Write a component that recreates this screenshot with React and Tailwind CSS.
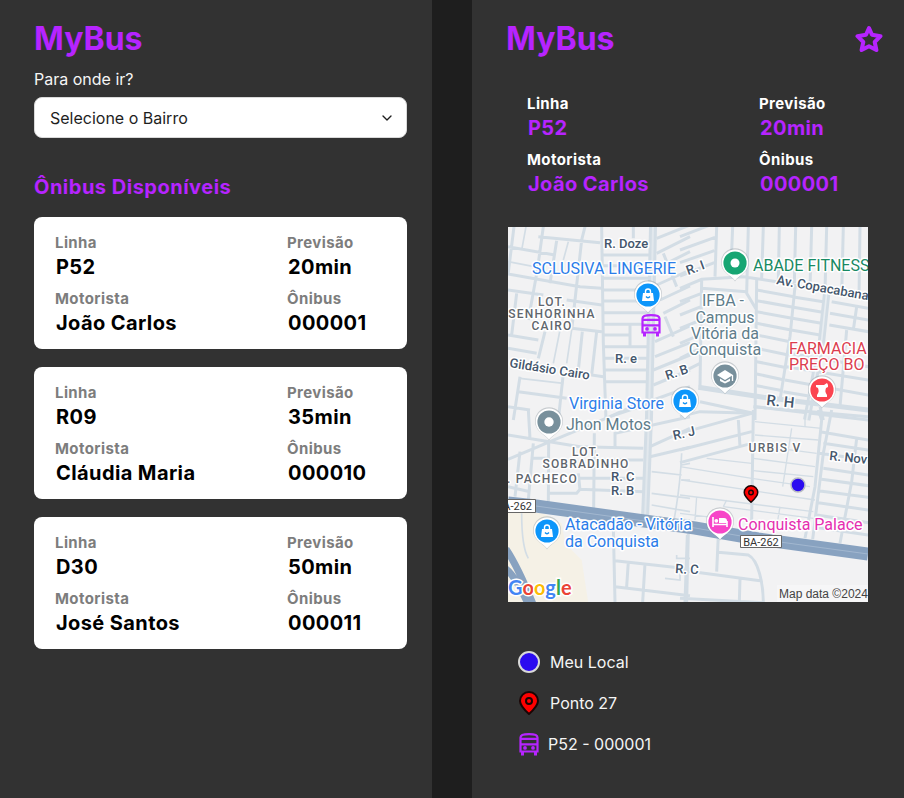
import { ChevronDown } from 'lucide-react';

const buses = [
  { line: 'P52', eta: '20min', driver: 'João Carlos', bus: '000001' },
  { line: 'R09', eta: '35min', driver: 'Cláudia Maria', bus: '000010' },
  { line: 'D30', eta: '50min', driver: 'José Santos', bus: '000011' },
];

function Field({ label, value, dark }) {
  return (
    <div className="font-bold tracking-wide">
      <dt className={dark ? 'text-[15px] leading-6 text-white' : 'text-[15px] leading-6 text-[#7d7d7d]'}>{label}</dt>
      <dd className={dark ? 'pl-px text-xl leading-6 text-[#b624ff]' : 'pl-px text-xl leading-6 text-black'}>{value}</dd>
    </div>
  );
}

function BusInfo({ data, dark }) {
  return (
    <dl className="grid grid-cols-[1fr_99px] gap-y-2 px-[21px] py-3.5">
      <Field label="Linha" value={data.line} dark={dark} />
      <Field label="Previsão" value={data.eta} dark={dark} />
      <Field label="Motorista" value={data.driver} dark={dark} />
      <Field label="Ônibus" value={data.bus} dark={dark} />
    </dl>
  );
}

function StarIcon(props) {
  return (
    <svg viewBox="0 0 28 28" fill="none" stroke="#b624ff" strokeWidth="4" strokeLinejoin="round" aria-hidden="true" {...props}>
      <path d="M14 3 17 9.800 25.500 11.200 19.700 17 21.400 25 14 21.200 6.600 25 8.300 17 2.500 11.200 11 9.800Z" />
    </svg>
  );
}

function BusIcon(props) {
  return (
    <svg viewBox="0 0 20 23" fill="none" stroke="#b624ff" strokeWidth="2.200" aria-hidden="true" {...props}>
      <path d="M1.500 18.500V4.500C1.500 2 4 1.200 10 1.200s8.500.800 8.500 3.300V18.500Z M1.500 5.800H18.500 M1.500 11.300H18.500" />
      <path d="M3.500 18v4.500M16.500 18v4.500" strokeWidth="3" />
      <circle cx="6" cy="14.900" r="1.900" fill="#b624ff" stroke="none" />
      <circle cx="14" cy="14.900" r="1.900" fill="#b624ff" stroke="none" />
    </svg>
  );
}

function StopIcon(props) {
  return (
    <svg viewBox="0 0 20 24" fill="#f00" stroke="#1a0505" strokeWidth="2" strokeLinejoin="round" aria-hidden="true" {...props}>
      <path d="M10 23C5 18.500 1 14.500 1 10a9 9 0 0 1 18 0c0 4.500-4 8.500-9 13Z" />
      <circle cx="10" cy="10" r="3" />
    </svg>
  );
}

function Pin({ x, y, color, children }) {
  return (
    <g transform={`translate(${x} ${y})`}>
      <path d="M0 18.500C-2 15-6 13-10 9A14 14 0 1 1 10 9C6 13 2 15 0 18.500Z" fill="#7a8790" opacity=".35" />
      <path d="M0 17.500C-2 14.500-6 12.500-9.500 9A13.300 13.300 0 1 1 9.500 9C6 12.500 2 14.500 0 17.500Z" fill="#fff" />
      <circle r="11.600" fill={color} />
      {children}
    </g>
  );
}

function Bag() {
  return (
    <g>
      <path d="M-5-2H5L6 6H-6Z" fill="#fff" />
      <path d="M-2.500-1.500V-3.500a2.500 2.500 0 0 1 5 0V-1.500" fill="none" stroke="#fff" strokeWidth="1.400" />
      <path d="M-2 1.500Q0 4 2 1.500" fill="none" stroke="#0d8ff2" strokeWidth="1.300" />
    </g>
  );
}

function CityMap() {
  return (
    <svg viewBox="0 0 360 375" role="img" aria-label="Mapa da linha" className="block h-auto w-full bg-[#f2f2f3]">
      <g transform="translate(-8 183) scale(.33333)">
        <path d="M24 300 130 310 185 340 195 400 245 450 265 580H24Z" fill="#f5f1e6" />
      </g>
      <g fill="none" stroke="#d3dde5" strokeWidth="9">
        <g transform="translate(-8 -7) scale(.33333)">
          <path d="M42 20 24 165M130 20 112 150 85 300M115 50 300 68M24 80 160 104M170 62 150 190M255 20 245 60 215 330M305 20 310 370 318 600M400 20V55M24 162 240 200 305 205M24 210 130 225M200 240 305 255M310 105H450M310 137H450M24 345 115 360M24 385 110 400M215 325 305 335M50 220 35 345M135 335 115 415M247 335 235 450M290 335 275 465 310 470M310 175H450M310 210H450M310 243H450M310 278H450M310 313H450M310 345H390M310 380H450M310 415H450M310 450H450M310 485H450M390 310V380M24 560 90 570M55 515 200 535M60 470 40 600M190 460 175 600M330 590 450 550" />
          <path d="M470 55 570 15M470 100 570 50M470 145 570 95M470 195 570 150M480 240 570 198M490 280 570 240M465 365 570 318M465 410 570 368M460 450 570 405M460 495 570 450M460 540 570 500M490 100 530 200M495 290 520 350" />
          <path d="M78 20 66 85M205 65 190 120M24 125 130 145M180 330 160 430M215 330 200 430M60 475 190 490" strokeWidth="5" />
        </g>
        <g transform="translate(172 -7) scale(.33333)">
          <path d="M0 50 90 15M0 90 105 52M0 128 103 92M0 168 103 128M0 205 65 178 190 170 290 185 565 240M0 245 65 220M0 285 63 260M0 325 63 300M0 370 63 343M0 415 60 385M0 460 60 430M110 20 105 170M158 20 155 95M205 20 200 220 230 270M250 20 245 175M298 20 295 180M347 20 343 190M395 20 390 205M440 20 435 215M490 20 485 225M540 20 537 235M65 178 60 500M65 205 200 215M230 180 225 600M345 200 330 350 300 540" />
          <path d="M230 210 342 230M230 242 340 262M230 275 336 295M230 310 333 330M230 345 330 365M230 385 325 405M230 425 320 443M230 462 313 480M230 497 308 512M345 232 430 245M340 262 428 277M337 295 424 310M333 330 420 345M326 400 565 440M320 440 565 480M315 480 565 525M310 515 400 530M455 245 565 265M450 280 565 300M448 315 565 335M530 260 520 330M500 330 480 560M60 545 220 580M0 590 60 575 220 580M225 560 565 600M420 560 430 600" />
          <path d="M440 220 425 360 380 600" strokeWidth="22" />
          <path d="M440 220 425 360 380 600" stroke="#e8edf1" strokeWidth="5" />
          <path d="M55 502 250 532 565 570" strokeWidth="15" />
        </g>
        <g transform="translate(-8 183) scale(.33333)">
          <path d="M24 75 240 110 430 115M24 148 150 95 330 20 440-30M60 125 45 260M85 0 90 85M100 100 85 270M146 95 145 285M283 70 281 300M345 110V70L570 20M24 230 90 245M95 145H145M145 250H230L240 238 430 245M240 205H430M235 190 240 240M283 150H430M450 140 570 112M450 110 570 55M340 350 345 576M345 452 570 477M385 455 380 530M345 530 570 557M435 460 428 576M565 370 560 576" />
          <path d="M65 310C65 380 70 420 85 445M545 130Q540 240 520 340M455 185 545 195M455 250 570 265M455 285 570 305M450 320 570 330M545 165 570 160M543 210H570M530 435V445H570M495 505 540 510V480" strokeWidth="5" />
        </g>
        <g transform="translate(172 183) scale(.33333)">
          <path d="M220 0 215 330M415 0 425 30 405 230 375 385M455 0 430 130 398 388M530 85 515 215 480 400M0 70 215 10M0 120 215 65M0 158 215 100M175 30 180 110M220-10 565 20M420 65 565 90M430 100 565 120M418 130 565 150M430 175 565 195M425 208 565 227M420 243 565 262M415 278 565 300M410 315 565 338M405 352 565 375M115 375 110 485M0 480 240 512M115 427 205 435C235 450 250 520 250 580M22 375 15 576M180 505 178 576M0 565 250 578" />
          <path d="M225 35 425 55M225 75 415 90M220 105 410 130M220 145 405 170M220 182 400 200M80 145 215 160M0 170 215 205 390 230M5 210 405 270M0 255 400 305M130 290 400 325M335 55 308 230M375 0V50M50 260 45 330M0 310 120 325M130 290 140 270M300 290 290 350" strokeWidth="4" />
        </g>
      </g>
      <path d="M145 0 141 190 137 292" fill="none" stroke="#d3dde5" strokeWidth="8" />
      <path d="M145 0 141 190 137 292" fill="none" stroke="#e2e8ed" strokeWidth="2" />
      <g fill="none">
        <path d="M0 276 28 279 100 289 187 301 250 312 360 327" stroke="#88a2c0" strokeWidth="13" />
        <path d="M28 279 100 289 187 301 250 312 360 327" stroke="#a2b7cf" strokeWidth="1" />
        <path d="M-2 322Q10 340 25 377M-2 342Q8 350 20 377" stroke="#88a2c0" strokeWidth="7" />
      </g>

      <g className="[font-family:Roboto,sans-serif]" stroke="#fff" strokeWidth="3" strokeLinejoin="round" paintOrder="stroke" fontSize="16">
        <g fontSize="13" fontWeight="500" fill="#44566c">
          <text x="96" y="21">R. Doze</text>
          <text x="107" y="136">R. e</text>
          <text transform="translate(1 140) rotate(9)">Gildásio Cairo</text>
          <text transform="translate(159 153) rotate(-18)">R. B</text>
          <text transform="translate(180 48) rotate(-20)">R. I</text>
          <text transform="translate(268 57) rotate(10)">Av. Copacabana</text>
          <text fontSize="15" transform="translate(258 178) rotate(6)">R. H</text>
          <text transform="translate(166 213) rotate(-13)">R. J</text>
          <text transform="translate(321 233) rotate(6)">R. Nov</text>
          <text x="103" y="254">R. C</text>
          <text x="103" y="268">R. B</text>
          <text transform="translate(167 346) rotate(3)">R. C</text>
        </g>
        <g fontSize="12" fontWeight="500" fill="#5f666d" textAnchor="middle" className="tracking-widest">
          <text x="44" y="79">LOT.</text>
          <text x="44" y="91">SENHORINHA</text>
          <text x="44" y="103">CAIRO</text>
          <text x="78" y="229">LOT.</text>
          <text x="78" y="241">SOBRADINHO</text>
          <text x="267" y="225">URBIS V</text>
          <text x="70" y="256" textAnchor="end">. PACHECO</text>
        </g>
        <g fill="#2b7de9">
          <text x="24" y="47">SCLUSIVA LINGERIE</text>
          <text x="61" y="182">Virginia Store</text>
          <text x="57" y="303">Atacadão - Vitória</text>
          <text x="57" y="320">da Conquista</text>
        </g>
        <text x="245" y="44" fill="#188a63">ABADE FITNESS</text>
        <g fill="#607d8b">
          <text x="58" y="203">Jhon Motos</text>
          <g textAnchor="middle">
            <text x="215" y="79">IFBA -</text>
            <text x="217" y="96">Campus</text>
            <text x="217" y="112">Vitória da</text>
            <text x="217" y="128">Conquista</text>
          </g>
        </g>
        <g fill="#dc3d4e">
          <text x="281" y="127">FARMACIA</text>
          <text x="281" y="143">PREÇO BO</text>
        </g>
        <text x="230" y="303" fill="#e52fb0">Conquista Palace</text>
      </g>

      <Pin x={140} y={68} color="#0d96fa"><Bag /></Pin>
      <Pin x={177} y={174} color="#0d96fa"><Bag /></Pin>
      <Pin x={39} y={304} color="#0d96fa"><Bag /></Pin>
      <Pin x={227} y={36} color="#17a673"><circle r="4.500" fill="#fff" /></Pin>
      <Pin x={41} y={195} color="#78909c"><circle r="4.700" fill="#fff" /></Pin>
      <Pin x={217} y={149} color="#78909c">
        <path d="M-8-1 0-6 8-1 0 4ZM-5 2.500 0 5.500 5 2.500V5L0 7.500-5 5Z" fill="#fff" />
        <path d="M7.500-1V5" stroke="#fff" strokeWidth="1.300" />
      </Pin>
      <Pin x={314} y={163} color="#fb4450">
        <path d="M-6-5H2L5-7 6-5H6V-3L4-2C3 1 3 2 5 5V7H-5V5C-3 2-3 1-4-2L-6-3Z" fill="#fff" />
      </Pin>
      <Pin x={212} y={295} color="#f745c8">
        <path d="M-7-5V5M-7 2.500H7V-1M7 2.500V5" stroke="#fff" strokeWidth="1.600" fill="none" />
        <path d="M-1 1V-4H4Q7-4 7-1V1Z" fill="#fff" />
        <circle cx="-3.700" cy="-1.200" r="1.900" fill="#fff" />
      </Pin>

      <g className="[font-family:Roboto,sans-serif]" fontSize="11" fill="#333">
        <path d="M-2 272.500H27.500V285.500H-2ZM232.500 308.500H273.500V320.500H232.500Z" fill="#fff" stroke="#666" />
        <text x="24" y="283" textAnchor="end">A-262</text>
        <text x="253" y="319" textAnchor="middle">BA-262</text>
      </g>

      <BusIcon x="133" y="87" width="20" height="23" />
      <StopIcon x="235" y="258" width="16" height="18" />
      <circle cx="290" cy="258" r="7" fill="#2b0bf0" stroke="#b9bcc4" strokeWidth="1.500" />

      <path d="M269 358H360V375H269Z" fill="#f7f7f7" opacity=".85" />
      <text x="271" y="371" fontSize="12" fill="#444" className="[font-family:'Liberation_Sans',sans-serif]">Map data ©2024</text>
      <text x="0" y="368" fontSize="20" fontWeight="700" stroke="#fff" strokeWidth="3" paintOrder="stroke" className="[font-family:Lato,sans-serif]">
        <tspan fill="#4285f4">G</tspan>
        <tspan fill="#ea4335">o</tspan>
        <tspan fill="#fbbc05">o</tspan>
        <tspan fill="#4285f4">g</tspan>
        <tspan fill="#34a853">l</tspan>
        <tspan fill="#ea4335">e</tspan>
      </text>
    </svg>
  );
}

export default function App() {
  return (
    <div className="grid min-h-screen grid-cols-2 gap-10 bg-[#1e1e1e] [font-family:Inter,sans-serif]">
      <section className="bg-[#323232] pt-[19px] pr-[25px] pb-8 pl-[34px]">
        <h1 className="text-[32px] leading-10 font-bold text-[#b624ff]">MyBus</h1>
        <label htmlFor="bairro" className="mt-2 block text-base leading-6 text-[#f5f5f5]">Para onde ir?</label>
        <div className="mt-1.5 grid items-center">
          <select id="bairro" className="col-start-1 row-start-1 h-[41px] w-full appearance-none rounded-lg border border-[#d9d9d9] bg-white px-[15px] text-base text-[#1e1e1e]">
            <option>Selecione o Bairro</option>
          </select>
          <ChevronDown className="pointer-events-none col-start-1 row-start-1 mr-3 size-4 justify-self-end text-[#1e1e1e]" />
        </div>
        <h2 className="mt-[35px] text-xl leading-7 font-bold tracking-wide text-[#b624ff]">Ônibus Disponíveis</h2>
        <ul className="mt-4 flex flex-col gap-[18px]">
          {buses.map((b) => (
            <li key={b.bus} className="rounded-lg bg-white">
              <BusInfo data={b} />
            </li>
          ))}
        </ul>
      </section>

      <section className="bg-[#323232] pt-[19px] pr-[25px] pb-8 pl-[34px]">
        <header className="flex items-center justify-between">
          <h1 className="text-[32px] leading-10 font-bold text-[#b624ff]">MyBus</h1>
          <button type="button" aria-label="Favoritar" className="-mr-1">
            <StarIcon className="size-7" />
          </button>
        </header>
        <div className="mt-[19px]">
          <BusInfo data={buses[0]} dark />
        </div>
        <div className="mt-[17px] mr-[11px] ml-0.5">
          <CityMap />
        </div>
        <ul className="mt-12 ml-3 flex flex-col gap-[17px] text-base leading-6 text-[#f5f5f5]">
          <li className="flex items-center gap-2.5">
            <span className="size-[22px] rounded-full border-2 border-[#d9d9d9] bg-[#2b0bf0]" />
            Meu Local
          </li>
          <li className="flex items-center gap-2.5">
            <StopIcon className="h-6 w-[22px]" />
            Ponto 27
          </li>
          <li className="flex items-center gap-2">
            <BusIcon className="h-[23px] w-[22px]" />
            P52 - 000001
          </li>
        </ul>
      </section>
    </div>
  );
}
